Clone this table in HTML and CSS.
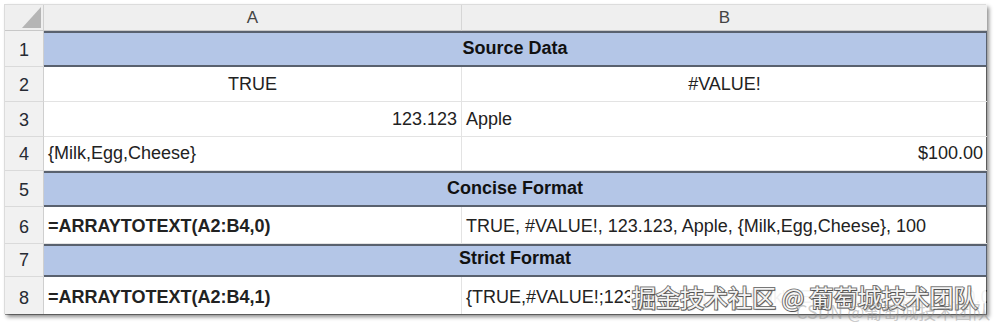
FILE: index.html
```html
<!DOCTYPE html>
<html>
<head>
<meta charset="utf-8">
<link rel="stylesheet" href="styles.css">
</head>
<body>
<div class="frame">
  <div class="sheet">
    <div class="corner"><span class="tri"></span></div>
    <div class="colhead colA">A</div>
    <div class="colhead colB">B</div>

    <div class="rowhead">1</div>
    <div class="band">Source Data</div>

    <div class="rowhead">2</div>
    <div class="cell a center">TRUE</div>
    <div class="cell b center">#VALUE!</div>

    <div class="rowhead">3</div>
    <div class="cell a right">123.123</div>
    <div class="cell b">Apple</div>

    <div class="rowhead">4</div>
    <div class="cell a">{Milk,Egg,Cheese}</div>
    <div class="cell b right">$100.00</div>

    <div class="rowhead">5</div>
    <div class="band">Concise Format</div>

    <div class="rowhead">6</div>
    <div class="cell a bold">=ARRAYTOTEXT(A2:B4,0)</div>
    <div class="cell b">TRUE, #VALUE!, 123.123, Apple, {Milk,Egg,Cheese}, 100</div>

    <div class="rowhead">7</div>
    <div class="band">Strict Format</div>

    <div class="rowhead last">8</div>
    <div class="cell a bold last">=ARRAYTOTEXT(A2:B4,1)</div>
    <div class="cell b last">{TRUE,#VALUE!;123.123,"Apple";{"Milk","Egg","Cheese"},"$100.00"}</div>
  </div>
  <div class="mark">掘金技术社区 @ 葡萄城技术团队</div>
  <div class="mark-faint">CSDN @葡萄城技术团队</div>
</div>
</body>
</html>
```
FILE: styles.css
```css
html, body {
  margin: 0;
  padding: 0;
  background: #ffffff;
}

.frame {
  position: relative;
  width: 1003px;
  height: 326px;
  padding: 4px 0 0 4px;
  box-sizing: border-box;
  overflow: hidden;
}

.sheet {
  display: grid;
  grid-template-columns: 39px 418px 525px;
  grid-template-rows: 26px 36px 35px 35px 34px 36px 37px 33px 37px;
  width: 982px;
  background: #ffffff;
  border-top: 1px solid #dcdcdc;
  border-left: 1px solid #dcdcdc;
  box-sizing: border-box;
  box-shadow: 3px 3px 4px rgba(0, 0, 0, 0.45), 1px 1px 0 #9a9a9a;
  font-family: "Liberation Sans", Arial, sans-serif;
  font-size: 18px;
  color: #222222;
}

.corner {
  position: relative;
  background: #efefef;
  border-right: 1px solid #d0d0d0;
  border-bottom: 1px solid #c8c8c8;
}

.tri {
  position: absolute;
  right: 2px;
  bottom: 2px;
  width: 0;
  height: 0;
  border-left: 19px solid transparent;
  border-bottom: 21px solid #b5b5b5;
}

.colhead {
  display: flex;
  align-items: center;
  justify-content: center;
  background: #efefef;
  border-bottom: 1px solid #c8c8c8;
  border-right: 1px solid #d6d6d6;
  color: #444444;
  font-size: 17px;
}

.colB {
  border-right: none;
}

.rowhead {
  display: flex;
  align-items: flex-end;
  justify-content: center;
  padding-bottom: 5px;
  background: #f1f1f1;
  border-right: 1px solid #cfcfcf;
  border-bottom: 1px solid #dadada;
  color: #262a33;
  font-size: 18px;
  box-sizing: border-box;
}

.cell {
  display: flex;
  align-items: flex-end;
  padding: 0 4px 6px 4px;
  border-bottom: 1px solid #e3e3e3;
  box-sizing: border-box;
  white-space: nowrap;
  overflow: hidden;
}

.cell.a {
  border-right: 1px solid #e3e3e3;
}

.center {
  justify-content: center;
}

.right {
  justify-content: flex-end;
}

.bold {
  font-weight: bold;
}

.last {
  border-bottom: none;
}

.band {
  grid-column: 2 / 4;
  display: flex;
  align-items: flex-end;
  justify-content: center;
  padding-bottom: 6px;
  background: #b4c6e7;
  border-top: 2px solid #59616e;
  border-bottom: 2px solid #59616e;
  border-right: 1px solid #59616e;
  box-sizing: border-box;
  font-weight: bold;
  font-size: 18px;
  color: #111111;
}

.mark {
  position: absolute;
  left: 630px;
  top: 281px;
  width: 356px;
  padding: 0 0 0 2px;
  box-sizing: border-box;
  background: rgba(255, 255, 255, 0.94);
  font-family: "Noto Sans CJK SC", "Liberation Sans", sans-serif;
  font-size: 24px;
  line-height: 32px;
  color: #f4f4f4;
  white-space: nowrap;
  overflow: hidden;
  -webkit-text-stroke: 2px #777777;
  paint-order: stroke fill;
  text-shadow: 1px 1px 1px rgba(0, 0, 0, 0.35);
}

.mark-faint {
  position: absolute;
  left: 796px;
  top: 300px;
  font-family: "Noto Sans CJK SC", "Liberation Sans", sans-serif;
  font-size: 18px;
  line-height: 22px;
  color: rgba(140, 140, 140, 0.45);
  white-space: nowrap;
}
```
